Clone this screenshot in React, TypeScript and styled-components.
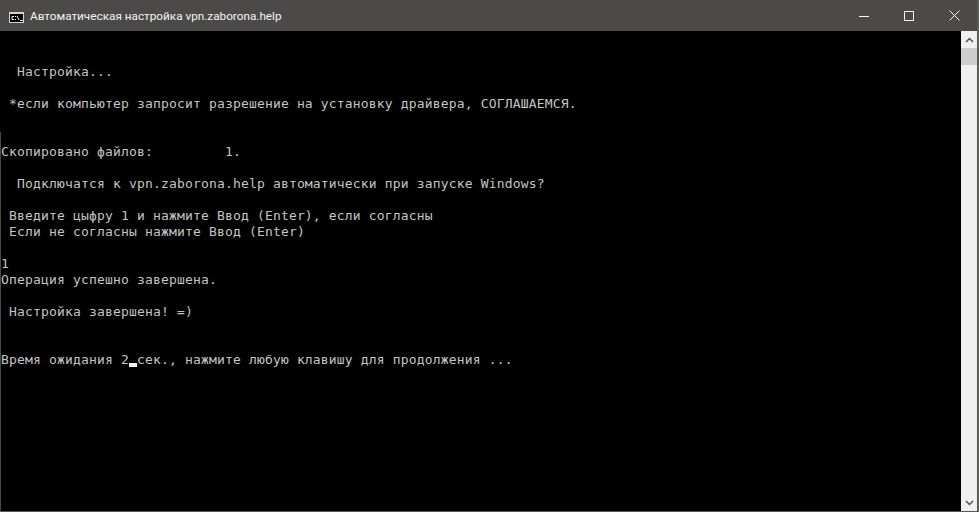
import React from 'react';
import styled, { createGlobalStyle } from 'styled-components';

const LINES: [number, string][] = [
  [2, '  Настройка...'],
  [4, ' *если компьютер запросит разрешение на установку драйвера, СОГЛАШАЕМСЯ.'],
  [7, 'Скопировано файлов:         1.'],
  [9, '  Подключатся к vpn.zaborona.help автоматически при запуске Windows?'],
  [11, ' Введите цыфру 1 и нажмите Ввод (Enter), если согласны'],
  [12, ' Если не согласны нажмите Ввод (Enter)'],
  [14, '1'],
  [15, 'Операция успешно завершена.'],
  [17, ' Настройка завершена! =)'],
  [20, 'Время ожидания 2 сек., нажмите любую клавишу для продолжения ...'],
];

const GlobalStyle = createGlobalStyle`
  html, body {
    margin: 0;
    padding: 0;
    background: #000;
  }
`;

const Window = styled.div`
  width: 979px;
  height: 512px;
  display: flex;
  flex-direction: column;
  overflow: hidden;
  background: #000;
  border-right: 2px solid #5a5a58;
  border-bottom: 1px solid #5a5a58;
  box-sizing: border-box;
`;

const TitleBar = styled.div`
  height: 31px;
  flex: none;
  display: flex;
  align-items: center;
  background: #4b4a48;
  padding-left: 9px;

  > svg:first-child {
    margin-top: 3px;
  }
`;

const Title = styled.div`
  margin-left: 6px;
  flex: 1;
  color: #f4f4f4;
  font: 11.75px/16px Roboto, 'Noto Sans', sans-serif;
  white-space: nowrap;
`;

const WinButton = styled.div<{ $wide?: boolean }>`
  width: ${(p) => (p.$wide ? 46 : 45)}px;
  height: 31px;
  display: flex;
  align-items: center;
  justify-content: center;
`;

const Body = styled.div`
  flex: 1;
  display: flex;
  min-height: 0;
  position: relative;

  &::before {
    content: '';
    position: absolute;
    left: 0;
    top: 101px;
    bottom: 0;
    width: 1px;
    background: #4a4a48;
  }
`;

const Console = styled.div`
  flex: 1;
  padding: 1px 0 0 1px;
  display: grid;
  grid-auto-rows: 16px;
  align-content: start;
`;

const Line = styled.div<{ $row: number }>`
  grid-row: ${(p) => p.$row + 1};
  position: relative;
  color: #c4c4c4;
  font: 13px/16px 'DejaVu Sans Mono', 'Liberation Mono', monospace;
  letter-spacing: 0.17px;
  white-space: pre;
`;

const Cursor = styled.span`
  position: absolute;
  left: 128px;
  top: 11px;
  width: 8px;
  height: 4px;
  background: #f2f2f2;
`;

const Scrollbar = styled.div`
  width: 16px;
  flex: none;
  display: flex;
  flex-direction: column;
  background: #f0f0f0;
`;

const ScrollButton = styled.div`
  height: 17px;
  flex: none;
  display: flex;
  align-items: center;
  justify-content: center;
  background: #f0f0f0;
`;

const Thumb = styled.div`
  height: 17px;
  flex: none;
  background: #cdcdcd;
`;

const Track = styled.div`
  flex: 1;
`;

const ConsoleIcon = () => (
  <svg width="15" height="11" viewBox="0 0 15 11">
    <rect width="15" height="11" fill="#d4d4d4" />
    <rect x="1" y="2" width="13" height="8" fill="#000" />
    <path d="M5 4.500H3v3h2M6.500 4v1M6.500 7v1M8 4l2 4M11 8.500h3" fill="none" stroke="#f4f4f4" />
  </svg>
);

const App = () => {
  return (
    <Window>
      <GlobalStyle />
      <TitleBar>
        <ConsoleIcon />
        <Title>Автоматическая настройка vpn.zaborona.help</Title>
        <WinButton>
          <svg width="10" height="10" viewBox="0 0 10 10">
            <path d="M0 5.500h10" stroke="#f4f4f4" />
          </svg>
        </WinButton>
        <WinButton>
          <svg width="10" height="10" viewBox="0 0 10 10">
            <rect x="0.5" y="0.5" width="9" height="9" fill="none" stroke="#f4f4f4" />
          </svg>
        </WinButton>
        <WinButton $wide>
          <svg width="11" height="11" viewBox="0 0 11 11">
            <path d="M0.5 0.500l10 10M10.500 0.500l-10 10" stroke="#f4f4f4" />
          </svg>
        </WinButton>
      </TitleBar>
      <Body>
        <Console>
          {LINES.map(([row, text]) => (
            <Line key={row} $row={row}>
              {text}
              {row === 20 && <Cursor />}
            </Line>
          ))}
        </Console>
        <Scrollbar>
          <ScrollButton>
            <svg width="9" height="6" viewBox="0 0 9 6">
              <path d="M1 5l3.500-3.500L8 5" fill="none" stroke="#505050" strokeWidth="1.500" />
            </svg>
          </ScrollButton>
          <Thumb />
          <Track />
          <ScrollButton>
            <svg width="9" height="6" viewBox="0 0 9 6">
              <path d="M1 1l3.500 3.500L8 1" fill="none" stroke="#505050" strokeWidth="1.500" />
            </svg>
          </ScrollButton>
        </Scrollbar>
      </Body>
    </Window>
  );
};

export default App;
